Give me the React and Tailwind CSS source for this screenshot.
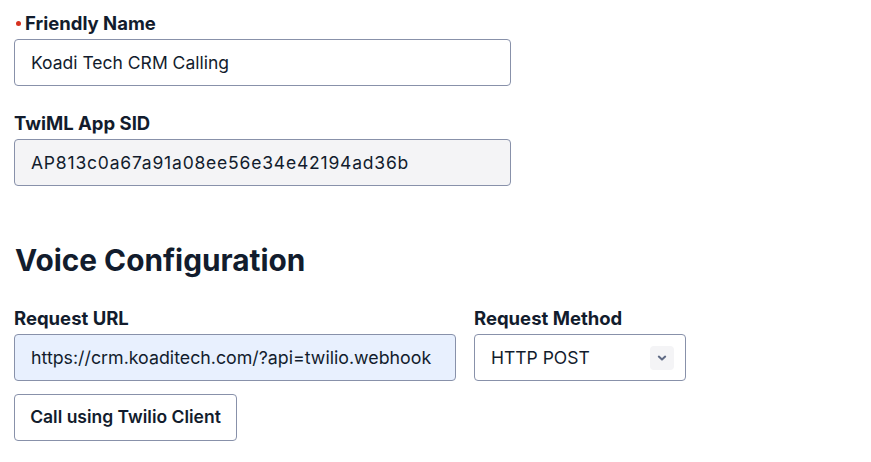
import React from 'react'

const Label = ({ children, required }) => (
  <div className="flex items-center h-6 leading-6 text-[18.5px] font-bold text-[#121c2d]">
    {required && <span className="w-[5px] h-[5px] rounded-full bg-[#d6311f] mr-[4px] ml-[2px]" />}
    {children}
  </div>
)

const Field = ({ value, className = '' }) => (
  <div className={`flex items-center h-[47px] rounded-[4px] border border-[#8891aa] pl-4 pt-[1px] text-[17.5px] text-[#121c2d] ${className}`}>
    {value}
  </div>
)

export default function App() {
  return (
    <div className="bg-white min-h-[462px] px-[14px] pt-[11px] font-['Inter',sans-serif]">
      <Label required>Friendly Name</Label>
      <Field value="Koadi Tech CRM Calling" className="mt-[4px] w-[497px] bg-white" />

      <div className="mt-[25px]">
        <Label>TwiML App SID</Label>
        <Field value="AP813c0a67a91a08ee56e34e42194ad36b" className="mt-[4px] w-[497px] bg-[#f4f4f6] tracking-[0.8px]" />
      </div>

      <h2 className="mt-[56px] pl-[1px] h-9 leading-9 text-[29.8px] font-bold text-[#121c2d]">Voice Configuration</h2>

      <div className="mt-[28px] flex gap-[18px]">
        <div className="w-[442px]">
          <Label>Request URL</Label>
          <Field value="https://crm.koaditech.com/?api=twilio.webhook" className="mt-[4px] bg-[#e8f0fe] text-[17.8px]" />
        </div>
        <div className="w-[212px]">
          <Label>Request Method</Label>
          <div className="mt-[4px] flex items-center justify-between h-[47px] rounded-[4px] border border-[#8891aa] pl-4 pr-[11px] pt-[1px] text-[17.5px] text-[#121c2d] bg-white">
            <span>HTTP POST</span>
            <span className="w-6 h-6 rounded-[4px] bg-[#f4f4f6] flex items-center justify-center">
              <svg width="14" height="14" viewBox="0 0 14 14" fill="none">
                <path d="M3.8 5.6 7 8.6 10.2 5.6" stroke="#606b85" strokeWidth="2" strokeLinecap="round" strokeLinejoin="round" />
              </svg>
            </span>
          </div>
        </div>
      </div>

      <button className="mt-[13px] h-[47px] w-[223px] rounded-[4px] border border-[#8891aa] bg-white text-[17.5px] font-semibold text-[#121c2d]">
        Call using Twilio Client
      </button>
    </div>
  )
}
